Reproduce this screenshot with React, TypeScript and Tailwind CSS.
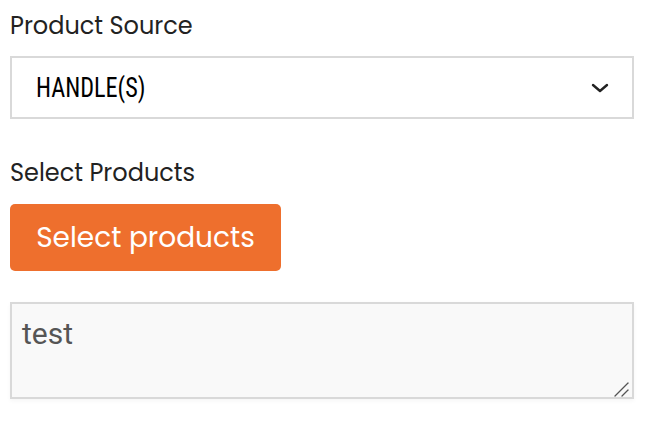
import React from "react";

export default function App() {
  return (
    <div className="w-[654px] h-[436px] bg-white px-[10px] pt-[10px] font-['Poppins',Lato,sans-serif]">
      <div className="text-[24px] leading-[32px] text-[#222]">Product Source</div>
      <div className="mt-[14px] h-[63px] w-[624px] border-2 border-[#d9d9d9] flex items-center justify-between pl-[24px] pr-[22px]">
        <span className="inline-block origin-left scale-x-[0.865] text-[28px] text-black font-['Liberation_Sans_Narrow','Roboto_Condensed',Roboto,sans-serif]">HANDLE(S)</span>
        <svg width="20" height="14" viewBox="0 0 20 14" fill="none" stroke="#222" strokeWidth="2.4" strokeLinecap="round" strokeLinejoin="round">
          <path d="M3 4l7 6 7-6" />
        </svg>
      </div>
      <div className="mt-[38px] text-[24px] leading-[32px] text-[#222]">Select Products</div>
      <button className="mt-[15px] h-[67px] w-[271px] rounded-[5px] bg-[#ee6f2d] text-white text-[28px]">Select products</button>
      <div className="relative mt-[31px] w-[624px] h-[97px]">
        <textarea
          defaultValue="test"
          className="block w-full h-full resize-none bg-[#f9f9f9] border-2 border-[#d9d9d9] px-[10px] pt-[10px] text-[30px] leading-[40px] text-[#555] font-['Roboto',sans-serif] outline-none shadow-[0_2px_4px_rgba(0,0,0,0.04)]"
        />
        <svg className="absolute right-[4px] bottom-[2px]" width="16" height="16" viewBox="0 0 16 16" fill="none" stroke="#555" strokeWidth="1.3" strokeLinecap="round">
          <path d="M1 15L14 2" />
          <path d="M8 15L14 9" />
        </svg>
      </div>
    </div>
  );
}
